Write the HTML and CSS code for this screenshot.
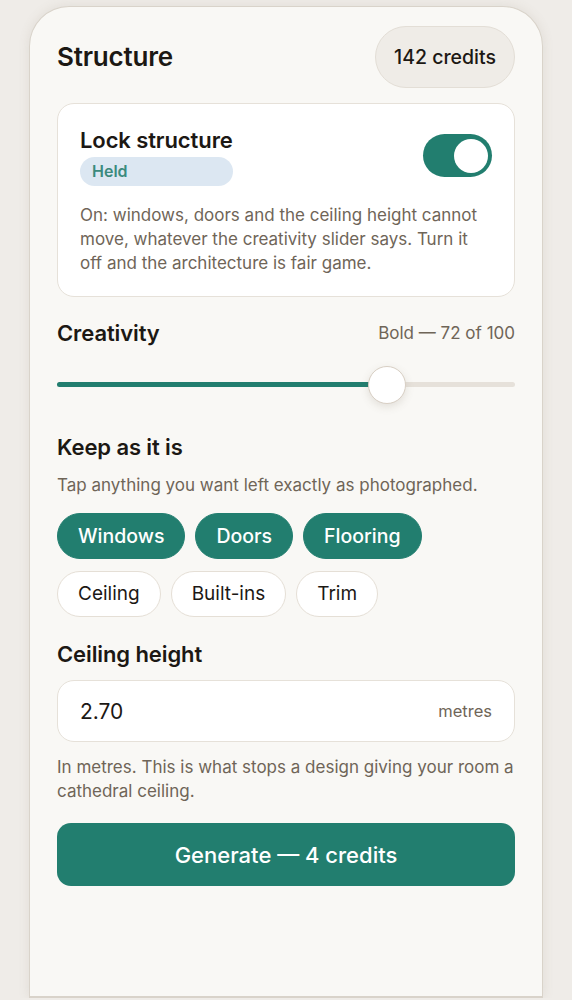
FILE: index.html
```html
<!DOCTYPE html>
<html lang="en">
<head>
  <meta charset="UTF-8">
  <title>Structure</title>
  <link rel="stylesheet" href="styles.css">
</head>
<body>
  <div class="phone">
    <div class="top-bar">
      <h1>Structure</h1>
      <div class="credits">142 credits</div>
    </div>

    <div class="lock-card">
      <div class="lock-head">
        <div class="lock-title">
          <h2>Lock structure</h2>
          <span class="badge">Held</span>
        </div>
        <div class="toggle on"><span class="knob"></span></div>
      </div>
      <p class="note">On: windows, doors and the ceiling height cannot move, whatever the creativity slider says. Turn it off and the architecture is fair game.</p>
    </div>

    <div class="section creativity">
      <div class="row-head">
        <h2>Creativity</h2>
        <span class="value">Bold — 72 of 100</span>
      </div>
      <div class="slider">
        <div class="fill" style="width: 72%"></div>
        <div class="thumb" style="left: 72%"></div>
      </div>
    </div>

    <div class="section keep">
      <h2>Keep as it is</h2>
      <p class="hint">Tap anything you want left exactly as photographed.</p>
      <div class="chips">
        <span class="chip active">Windows</span>
        <span class="chip active">Doors</span>
        <span class="chip active">Flooring</span>
        <span class="chip">Ceiling</span>
        <span class="chip">Built-ins</span>
        <span class="chip">Trim</span>
      </div>
    </div>

    <div class="section height">
      <h2>Ceiling height</h2>
      <div class="field">
        <span class="field-value">2.70</span>
        <span class="unit">metres</span>
      </div>
      <p class="hint">In metres. This is what stops a design giving your room a cathedral ceiling.</p>
    </div>

    <button class="generate">Generate — 4 credits</button>
  </div>
</body>
</html>
```

FILE: styles.css
```css
body {
  font-family: 'Inter', 'Noto Sans', sans-serif;
  background: #efece8;
  color: #1c1814;
  margin: 0;
  padding: 6px 29px 0;
}

.phone {
  background: #f9f8f5;
  border: 1.5px solid #d9d3ca;
  border-bottom-width: 2px;
  border-radius: 40px 40px 0 0;
  box-shadow: 0 0 12px rgba(120, 105, 85, 0.12);
  min-height: 992px;
  box-sizing: border-box;
  padding: 19px 27px 0;
}

h1, h2, p {
  margin: 0;
}

.top-bar {
  display: flex;
  justify-content: space-between;
  align-items: center;
}

h1 {
  font-size: 26px;
  line-height: 32px;
  font-weight: 600;
  letter-spacing: -0.2px;
}

.credits {
  background: #efece7;
  border: 1px solid #e3ded6;
  border-radius: 31px;
  padding: 0 18px;
  height: 62px;
  line-height: 60px;
  font-size: 19.5px;
  font-weight: 500;
  box-sizing: border-box;
}

.lock-card {
  margin-top: 15px;
  background: #fff;
  border: 1px solid #e6e1d9;
  border-radius: 17px;
  padding: 22px 22px 21px;
}

.lock-head {
  display: flex;
  justify-content: space-between;
  align-items: flex-start;
}

.lock-title {
  display: flex;
  flex-direction: column;
}

h2 {
  font-size: 22px;
  line-height: 28px;
  font-weight: 600;
  letter-spacing: -0.1px;
}

.badge {
  margin-top: 3px;
  background: #dce7f2;
  color: #3b8a7d;
  border-radius: 15px;
  padding: 0 12px;
  height: 29px;
  line-height: 29px;
  font-size: 16px;
  font-weight: 600;
}

.toggle {
  width: 69px;
  height: 43px;
  border-radius: 22px;
  background: #d9d3ca;
  margin-top: 8px;
  position: relative;
}

.toggle.on {
  background: #227e6f;
}

.knob {
  position: absolute;
  top: 4.5px;
  right: 4px;
  width: 34px;
  height: 34px;
  border-radius: 50%;
  background: #fff;
}

.note {
  margin-top: 17px;
  font-size: 17px;
  line-height: 24px;
  color: #6f6558;
}

.creativity {
  margin-top: 22px;
}

.row-head {
  display: flex;
  justify-content: space-between;
  align-items: center;
}

.value {
  font-size: 17px;
  color: #6f6558;
}

.slider {
  position: relative;
  height: 5px;
  background: #e6e1da;
  border-radius: 3px;
  margin-top: 35px;
}

.fill {
  height: 100%;
  background: #227e6f;
  border-radius: 3px;
}

.thumb {
  position: absolute;
  top: 50%;
  width: 36px;
  height: 36px;
  margin: -19px 0 0 -19px;
  border-radius: 50%;
  background: #fff;
  border: 1.5px solid #d8cfc4;
  box-shadow: 0 3px 8px rgba(100, 85, 65, 0.15);
}

.keep {
  margin-top: 46px;
}

.hint {
  margin-top: 12px;
  font-size: 17px;
  line-height: 24px;
  color: #6f6558;
}

.chips {
  display: flex;
  flex-wrap: wrap;
  gap: 12px 10px;
  margin-top: 16px;
}

.chip {
  height: 46px;
  line-height: 44px;
  padding: 0 20px;
  border-radius: 23px;
  border: 1px solid #e5dfd6;
  background: #fff;
  font-size: 19px;
  box-sizing: border-box;
}

.chip.active {
  background: #227e6f;
  border-color: #227e6f;
  color: #fff;
  font-size: 19.5px;
  font-weight: 500;
}

.height {
  margin-top: 23px;
}

.field {
  margin-top: 12px;
  display: flex;
  justify-content: space-between;
  align-items: center;
  height: 62px;
  box-sizing: border-box;
  padding: 0 22px;
  background: #fff;
  border: 1px solid #e6e1d9;
  border-radius: 17px;
}

.field-value {
  font-size: 21px;
}

.unit {
  font-size: 16.5px;
  color: #6f6558;
}

.field + .hint {
  margin-top: 13px;
}

.generate {
  display: block;
  width: 100%;
  margin-top: 20px;
  height: 63px;
  border: none;
  border-radius: 14px;
  background: #227e6f;
  color: #fff;
  font-family: inherit;
  font-size: 22px;
  font-weight: 500;
}
```
